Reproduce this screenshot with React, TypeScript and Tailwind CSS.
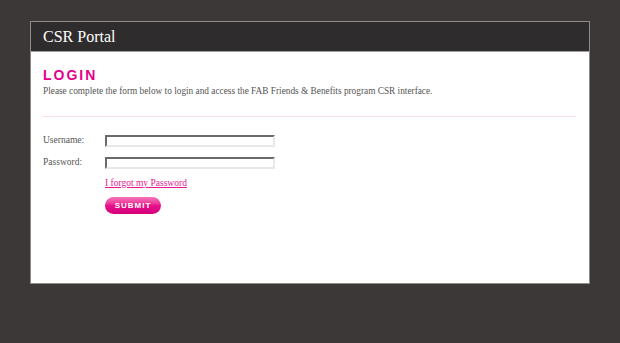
export default function App() {
  return (
    <div className="min-h-[343px] w-[620px] bg-[#3d3838] pt-[21px] pl-[30px]">
      <div className="w-[560px] h-[263px] border border-[#8c8c8c] bg-white flex flex-col">
        <div className="h-[30px] bg-[#2e2c2c] border-b border-[#a0a0a0] flex items-center pl-[12px]">
          <span className="text-white text-[16px] leading-none font-['Liberation_Serif',serif]">CSR Portal</span>
        </div>
        <div className="pl-[12px] pr-[13px] pt-[15px]">
          <h1 className="text-[#e5008a] text-[14px] leading-[16px] font-bold tracking-[2px] font-['Liberation_Sans',Arial,sans-serif]">
            LOGIN
          </h1>
          <p className="mt-[2px] text-[#555] text-[9.3px] leading-[12px] font-['Liberation_Serif',serif]">
            Please complete the form below to login and access the FAB Friends &amp; Benefits program CSR interface.
          </p>
          <div className="mt-[19px] h-px bg-[#fbdcea]" />
          <form className="mt-[18px] grid grid-cols-[62px_170px] gap-y-[10px] items-center font-['Liberation_Serif',serif] text-[9.5px] leading-[12px] text-[#555]">
            <label className="-mt-[2px]">Username:</label>
            <input className="h-[12px] border-2 border-t-[#6a6a6a] border-l-[#6a6a6a] border-b-[#e8e8e8] border-r-[#e8e8e8] bg-white" />
            <label className="-mt-[2px]">Password:</label>
            <input type="password" className="h-[12px] border-2 border-t-[#6a6a6a] border-l-[#6a6a6a] border-b-[#e8e8e8] border-r-[#e8e8e8] bg-white" />
            <div />
            <a href="#" className="-mt-[2px] text-[#e8178f] underline justify-self-start">I forgot my Password</a>
            <div />
            <button
              type="button"
              className="-mt-[2px] w-[56px] h-[17px] rounded-full bg-gradient-to-b from-[#f573bb] via-[#e8108c] to-[#d4007a] text-white text-[8px] font-bold tracking-[1px] font-['Liberation_Sans',Arial,sans-serif] leading-none"
            >
              SUBMIT
            </button>
          </form>
        </div>
      </div>
    </div>
  )
}
